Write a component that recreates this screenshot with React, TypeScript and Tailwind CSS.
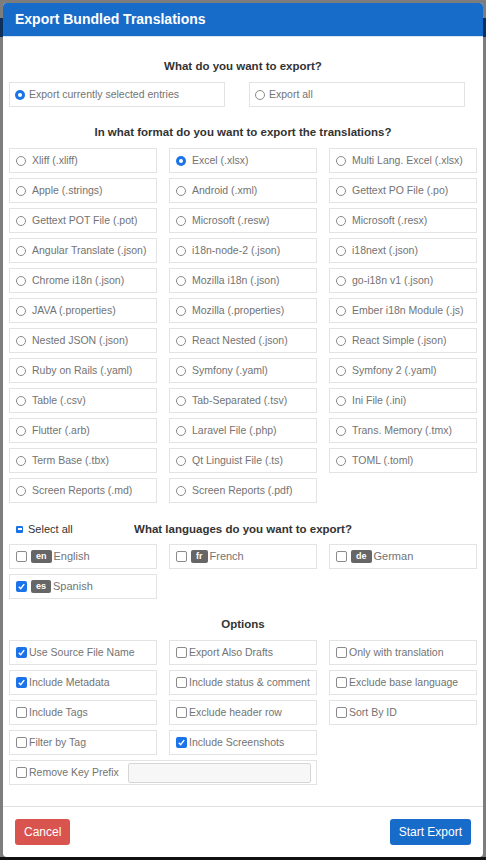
import React from "react";

const FORMATS: [string, boolean][] = [
  ["Xliff (.xliff)", false],
  ["Excel (.xlsx)", true],
  ["Multi Lang. Excel (.xlsx)", false],
  ["Apple (.strings)", false],
  ["Android (.xml)", false],
  ["Gettext PO File (.po)", false],
  ["Gettext POT File (.pot)", false],
  ["Microsoft (.resw)", false],
  ["Microsoft (.resx)", false],
  ["Angular Translate (.json)", false],
  ["i18n-node-2 (.json)", false],
  ["i18next (.json)", false],
  ["Chrome i18n (.json)", false],
  ["Mozilla i18n (.json)", false],
  ["go-i18n v1 (.json)", false],
  ["JAVA (.properties)", false],
  ["Mozilla (.properties)", false],
  ["Ember i18n Module (.js)", false],
  ["Nested JSON (.json)", false],
  ["React Nested (.json)", false],
  ["React Simple (.json)", false],
  ["Ruby on Rails (.yaml)", false],
  ["Symfony (.yaml)", false],
  ["Symfony 2 (.yaml)", false],
  ["Table (.csv)", false],
  ["Tab-Separated (.tsv)", false],
  ["Ini File (.ini)", false],
  ["Flutter (.arb)", false],
  ["Laravel File (.php)", false],
  ["Trans. Memory (.tmx)", false],
  ["Term Base (.tbx)", false],
  ["Qt Linguist File (.ts)", false],
  ["TOML (.toml)", false],
  ["Screen Reports (.md)", false],
  ["Screen Reports (.pdf)", false],
];

const LANGS: [string, string, boolean][] = [
  ["en", "English", false],
  ["fr", "French", false],
  ["de", "German", false],
  ["es", "Spanish", true],
];

const OPTIONS: [string, boolean][] = [
  ["Use Source File Name", true],
  ["Export Also Drafts", false],
  ["Only with translation", false],
  ["Include Metadata", true],
  ["Include status & comment", false],
  ["Exclude base language", false],
  ["Include Tags", false],
  ["Exclude header row", false],
  ["Sort By ID", false],
  ["Filter by Tag", false],
  ["Include Screenshots", true],
];

function Radio({ on }: { on: boolean }) {
  return on ? (
    <span className="flex h-[10px] w-[10px] shrink-0 items-center justify-center rounded-full bg-[#1a73e8]">
      <span className="h-[4px] w-[4px] rounded-full bg-white" />
    </span>
  ) : (
    <span className="h-[10px] w-[10px] shrink-0 rounded-full border border-[#8a8a8a] bg-white" />
  );
}

function Check({ on }: { on: boolean }) {
  return on ? (
    <span className="flex h-[11px] w-[11px] shrink-0 items-center justify-center rounded-[2px] bg-[#1a73e8]">
      <svg viewBox="0 0 10 10" className="h-[9px] w-[9px]">
        <path d="M2 5.2 L4.1 7.4 L8 2.4" fill="none" stroke="white" strokeWidth="1.6" />
      </svg>
    </span>
  ) : (
    <span className="h-[11px] w-[11px] shrink-0 rounded-[2px] border border-[#8a8a8a] bg-white" />
  );
}

function Box({ children, className = "" }: { children: React.ReactNode; className?: string }) {
  return (
    <div className={`flex h-[25px] items-center border border-[#e3e3e3] text-[10.5px] text-[#737373] ${className}`}>
      {children}
    </div>
  );
}

function Heading({ children }: { children: React.ReactNode }) {
  return <div className="h-[16px] text-center text-[11.5px] font-bold leading-[16px] text-[#333]">{children}</div>;
}

export default function App() {
  return (
    <div
      className="relative h-[860px] overflow-hidden bg-[#7d7d7d]"
      style={{ fontFamily: '"Liberation Sans", Arial, sans-serif' }}
    >
      {/* app behind the overlay */}
      <div className="absolute left-0 right-0 top-[18px] h-[19px] bg-[#0c2f5e]" />
      <div className="absolute bottom-0 left-0 right-0 h-[3px] bg-[#111]" />

      <div className="relative ml-[3px] mt-[3px] flex h-[854px] w-[480px] flex-col overflow-hidden rounded-[4px] bg-white">
        <div className="flex h-[34px] shrink-0 items-center border-b border-[#d9e4f2] bg-[#176bc9] px-[12px]">
          <span className="text-[14px] font-bold text-white">Export Bundled Translations</span>
        </div>

        <div className="flex-1 px-[6px] pt-[21px]">
          <Heading>What do you want to export?</Heading>
          <div className="mt-[8px] flex gap-[24px]">
            <Box className="w-[216px] gap-[4px] pl-[5px]">
              <Radio on={true} />
              <span>Export currently selected entries</span>
            </Box>
            <Box className="w-[216px] gap-[4px] pl-[5px]">
              <Radio on={false} />
              <span>Export all</span>
            </Box>
          </div>

          <div className="mt-[17px]">
            <Heading>In what format do you want to export the translations?</Heading>
          </div>
          <div className="mt-[8px] grid grid-cols-[148px_148px_148px] gap-x-[12px] gap-y-[5px]">
            {FORMATS.map(([label, on]) => (
              <Box key={label} className="gap-[6px] pl-[6px]">
                <Radio on={on} />
                <span>{label}</span>
              </Box>
            ))}
          </div>

          <div className="relative mt-[18px]">
            <div className="absolute left-[7px] top-0 flex h-[16px] items-center gap-[5px] text-[11px] text-[#333]">
              <span className="flex h-[7px] w-[7px] items-center justify-center rounded-[1px] bg-[#1a73e8]">
                <span className="h-[1.5px] w-[4px] bg-white" />
              </span>
              <span>Select all</span>
            </div>
            <Heading>What languages do you want to export?</Heading>
          </div>
          <div className="mt-[7px] grid grid-cols-[148px_148px_148px] gap-x-[12px] gap-y-[5px]">
            {LANGS.map(([code, name, on]) => (
              <Box key={code} className="pl-[6px] text-[11px]">
                <Check on={on} />
                <span className="ml-[4px] flex h-[13px] min-w-[16px] items-center justify-center rounded-[2px] bg-[#666] px-[5px] text-[9px] font-bold text-white">
                  {code}
                </span>
                <span className="ml-[2px]">{name}</span>
              </Box>
            ))}
          </div>

          <div className="mt-[17px]">
            <Heading>Options</Heading>
          </div>
          <div className="mt-[8px] grid grid-cols-[148px_148px_148px] gap-x-[12px] gap-y-[5px]">
            {OPTIONS.map(([label, on]) => (
              <Box key={label} className="gap-[2px] pl-[6px]">
                <Check on={on} />
                <span>{label}</span>
              </Box>
            ))}
            <Box className="col-span-2 gap-[2px] pl-[6px]">
              <Check on={false} />
              <span>Remove Key Prefix</span>
              <span className="ml-auto mr-[5px] h-[20px] w-[183px] rounded-[2px] border border-[#d6d6d6] bg-[#f7f7f7]" />
            </Box>
          </div>
        </div>

        <div className="flex h-[51px] shrink-0 items-center justify-between border-t border-[#e0e0e0] px-[12px] pb-[1px]">
          <button className="h-[26px] rounded-[3px] bg-[#d9534f] px-[9px] text-[12px] text-white">Cancel</button>
          <button className="h-[26px] rounded-[3px] bg-[#176bc9] px-[9px] text-[12px] text-white">Start Export</button>
        </div>
      </div>
    </div>
  );
}
